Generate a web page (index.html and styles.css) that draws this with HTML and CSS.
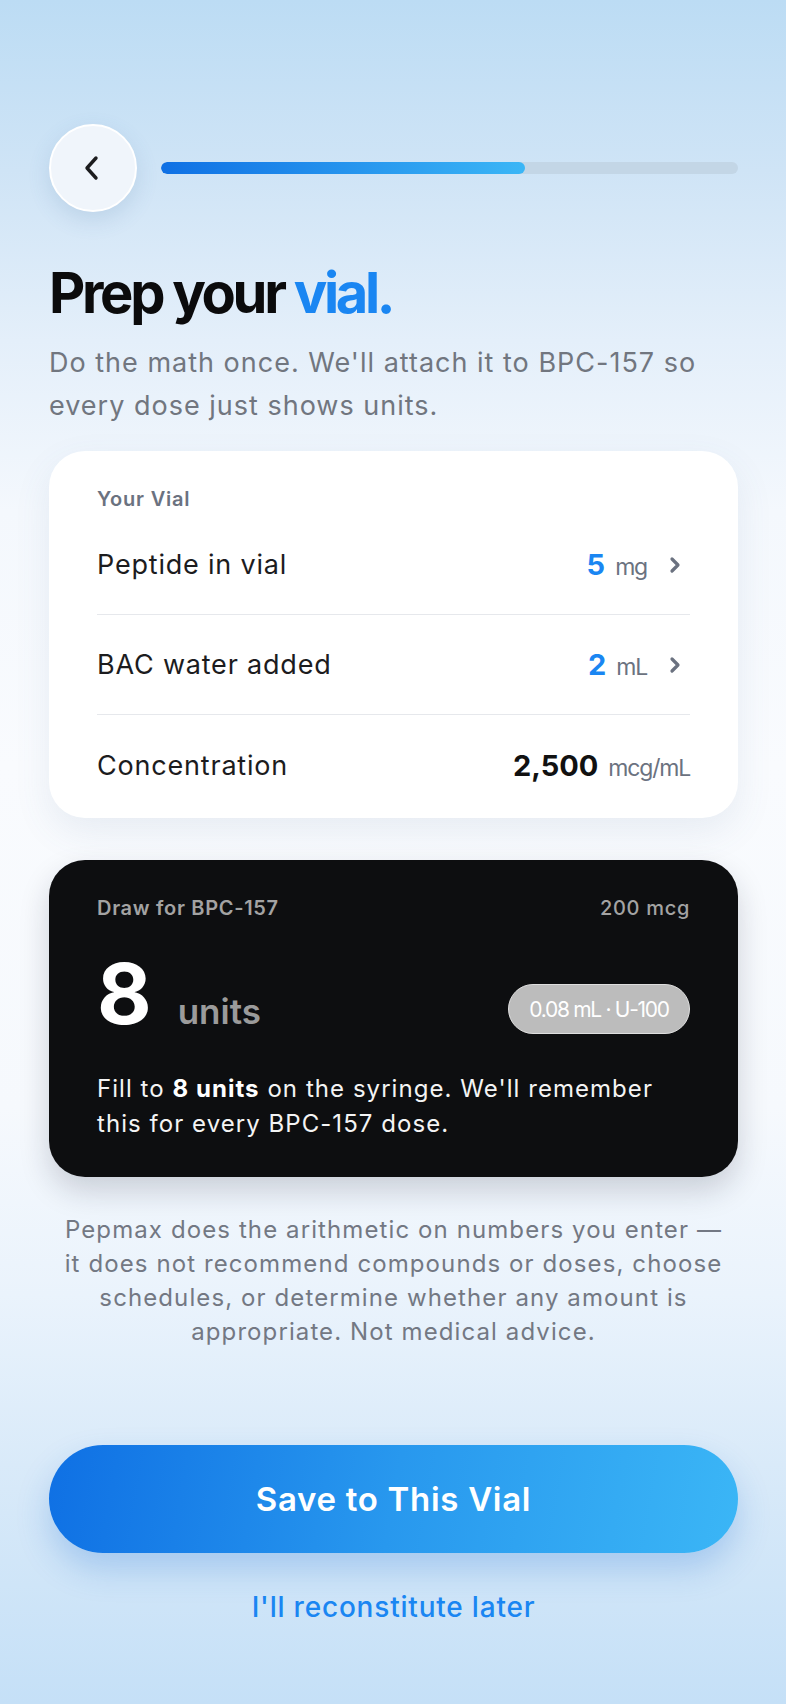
FILE: index.html
```html
<!DOCTYPE html>
<html lang="en">
<head>
<meta charset="utf-8">
<title>Prep your vial</title>
<link rel="stylesheet" href="styles.css">
</head>
<body>
<main class="screen">
  <header class="topbar">
    <button class="back" aria-label="Back">
      <svg width="28" height="28" viewBox="0 0 28 28"><polyline points="17,4 8,14 17,24" fill="none" stroke="#1c1c1e" stroke-width="3.4" stroke-linecap="round" stroke-linejoin="round"/></svg>
    </button>
    <div class="progress"><div class="progress-fill" style="width:63%"></div></div>
  </header>

  <h1 class="title">Prep your <span class="accent">vial.</span></h1>
  <p class="subtitle">Do the math once. We'll attach it to BPC-157 so every dose just shows units.</p>

  <section class="card">
    <div class="card-label">Your Vial</div>
    <div class="row">
      <span class="row-label">Peptide in vial</span>
      <span class="row-value">
        <span class="num blue">5</span><span class="unit">mg</span>
        <svg class="chev" width="20" height="24" viewBox="0 0 20 24"><polyline points="7,6 13,12 7,18" fill="none" stroke="#6b7280" stroke-width="3.2" stroke-linecap="round" stroke-linejoin="round"/></svg>
      </span>
    </div>
    <div class="row">
      <span class="row-label">BAC water added</span>
      <span class="row-value">
        <span class="num blue">2</span><span class="unit">mL</span>
        <svg class="chev" width="20" height="24" viewBox="0 0 20 24"><polyline points="7,6 13,12 7,18" fill="none" stroke="#6b7280" stroke-width="3.2" stroke-linecap="round" stroke-linejoin="round"/></svg>
      </span>
    </div>
    <div class="row last">
      <span class="row-label">Concentration</span>
      <span class="row-value">
        <span class="num dark">2,500</span><span class="unit">mcg/mL</span>
      </span>
    </div>
  </section>

  <section class="draw">
    <div class="draw-head">
      <span class="draw-label">Draw for BPC-157</span>
      <span class="draw-dose">200 mcg</span>
    </div>
    <div class="draw-main">
      <div class="draw-amount"><span class="big">8</span><span class="big-unit">units</span></div>
      <span class="pill">0.08 mL · U-100</span>
    </div>
    <p class="draw-text">Fill to <strong>8 units</strong> on the syringe. We'll remember this for every BPC-157 dose.</p>
  </section>

  <p class="disclaimer">Pepmax does the arithmetic on numbers you enter — it does not recommend compounds or doses, choose schedules, or determine whether any amount is appropriate. Not medical advice.</p>

  <button class="primary">Save to This Vial</button>
  <a class="later" href="#">I'll reconstitute later</a>
</main>
</body>
</html>
```

FILE: styles.css
```css
* { box-sizing: border-box; }

html, body {
  margin: 0;
  padding: 0;
}

body {
  width: 786px;
  min-height: 1704px;
  font-family: Inter, "Noto Sans", sans-serif;
  background: linear-gradient(180deg, #bcdcf4 0%, #cfe4f6 10%, #e4effa 20%, #f4f8fd 30%, #f9fbfe 45%, #f6f9fd 65%, #eaf3fc 76%, #d9eaf9 86%, #c5e0f7 100%);
  color: #111;
}

.screen {
  display: flex;
  flex-direction: column;
  padding: 124px 48px 0 49px;
}

.topbar {
  display: flex;
  align-items: center;
  gap: 24px;
  height: 88px;
}

.back {
  width: 88px;
  height: 88px;
  flex: none;
  border-radius: 50%;
  background: #f0f5fb;
  border: 2px solid #ffffff;
  box-shadow: 0 8px 22px rgba(70, 110, 160, 0.16);
  display: flex;
  align-items: center;
  justify-content: center;
  padding: 0;
}

.progress {
  flex: 1;
  height: 12px;
  border-radius: 6px;
  background: #c3d6e6;
  overflow: hidden;
}

.progress-fill {
  height: 100%;
  border-radius: 6px;
  background: linear-gradient(90deg, #0f70e4, #3bb6f6);
}

.title {
  margin: 49px 0 0;
  font-size: 56px;
  line-height: 64px;
  font-weight: 700;
  letter-spacing: -3.3px;
  color: #0b0b0c;
}

.accent { color: #1a86f2; }

.subtitle {
  margin: 16px 0 0;
  font-size: 27px;
  line-height: 43px;
  color: #71767f;
  letter-spacing: 1.0px;
}

.card {
  margin-top: 24px;
  background: #ffffff;
  border-radius: 36px;
  padding: 36px 48px 3px;
  box-shadow: 0 14px 36px rgba(80, 110, 150, 0.10);
}

.card-label {
  font-size: 20px;
  line-height: 24px;
  font-weight: 600;
  letter-spacing: 0.8px;
  color: #6b7280;
  margin-bottom: 4px;
}

.row {
  height: 100px;
  display: flex;
  align-items: center;
  justify-content: space-between;
  border-bottom: 1.5px solid #e6e8ec;
}

.row.last { border-bottom: none; }

.row-label {
  font-size: 27px;
  letter-spacing: 0.8px;
  color: #1c1c1e;
}

.row-value {
  display: flex;
  align-items: baseline;
}

.num {
  font-size: 29px;
  font-weight: 700;
}

.num.blue { color: #1a86f2; }
.num.dark { color: #111; }

.unit {
  margin-left: 10px;
  font-size: 23px;
  letter-spacing: -1.2px;
  color: #6b7280;
}

.chev {
  margin-left: 18px;
  align-self: center;
  margin-right: 5px;
}

.draw {
  margin-top: 42px;
  background: #0d0e10;
  border-radius: 36px;
  padding: 36px 48px 36px;
  box-shadow: 0 14px 30px rgba(20, 30, 50, 0.18);
  color: #fff;
}

.draw-head {
  display: flex;
  justify-content: space-between;
  font-size: 20px;
  line-height: 24px;
  color: #a3a3a3;
  letter-spacing: 0.7px;
}

.draw-label { font-weight: 600; }
.draw-dose { font-weight: 500; }

.draw-main {
  margin-top: 32px;
  display: flex;
  justify-content: space-between;
  align-items: flex-end;
}

.draw-amount {
  display: flex;
  align-items: baseline;
  gap: 26px;
}

.big {
  font-size: 84px;
  line-height: 84px;
  font-weight: 700;
  color: #fff;
}

.big-unit {
  font-size: 35px;
  line-height: 40px;
  font-weight: 600;
  color: #9b9b9b;
}

.pill {
  margin-bottom: 2px;
  width: 182px;
  height: 50px;
  border-radius: 25px;
  background: #bcbcbc;
  border: 1.5px solid #dedede;
  display: flex;
  align-items: center;
  justify-content: center;
  font-size: 21px;
  letter-spacing: -1.3px;
  color: #fff;
}

.draw-text {
  margin: 35px 0 0;
  font-size: 24px;
  line-height: 35px;
  letter-spacing: 1.05px;
  color: #f4f4f4;
}

.draw-text strong { font-weight: 700; color: #fff; }

.disclaimer {
  margin: 36px 0 0;
  padding: 0 12px;
  text-align: center;
  font-size: 24px;
  line-height: 34px;
  letter-spacing: 1.1px;
  color: #737883;
}

.primary {
  margin-top: 96px;
  height: 108px;
  border: none;
  border-radius: 54px;
  background: linear-gradient(100deg, #0f70e4 0%, #2898ee 50%, #3bb6f6 100%);
  box-shadow: 0 16px 32px rgba(30, 110, 210, 0.25);
  color: #fff;
  font-family: inherit;
  font-size: 33px;
  font-weight: 600;
  letter-spacing: 0.7px;
}

.later {
  margin-top: 37px;
  align-self: center;
  font-size: 28px;
  line-height: 34px;
  font-weight: 500;
  letter-spacing: 0.8px;
  color: #1a86f2;
  text-decoration: none;
}
```
